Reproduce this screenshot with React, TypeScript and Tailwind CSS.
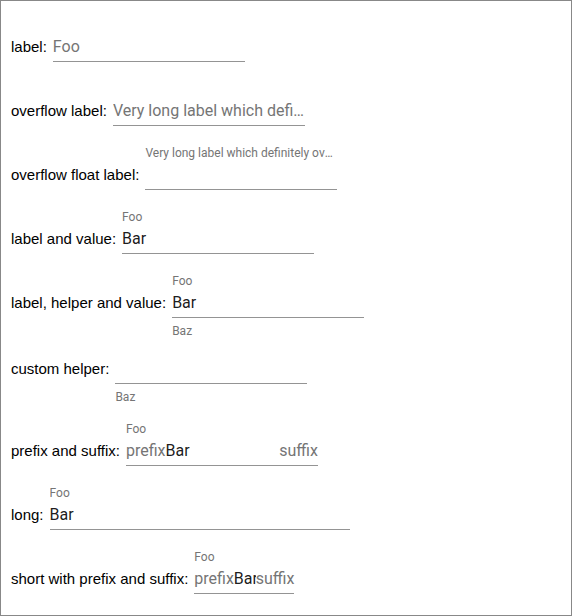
import React from 'react';
import { clsx, type ClassValue } from 'clsx';
import { twMerge } from 'tailwind-merge';

function cn(...inputs: ClassValue[]) {
  return twMerge(clsx(inputs));
}

type FieldProps = {
  label?: string;
  value?: string;
  float?: boolean;
  helper?: string;
  prefix?: string;
  suffix?: string;
  width: string;
};

function Field({ label, value, float, helper, prefix, suffix, width }: FieldProps) {
  const floated = !!label && (float || !!value || !!prefix);
  return (
    <div className={cn("flex flex-col font-['Roboto',sans-serif]", width)}>
      {label && (
        <div className="h-[16px] text-[12px] leading-[14px] text-[#757575] whitespace-nowrap overflow-hidden text-ellipsis">
          {floated ? label : ''}
        </div>
      )}
      <div className="h-[28px] border-b border-[#949494] flex items-start text-[16px] leading-[25px] whitespace-nowrap">
        {label && !floated ? (
          <span className="min-w-0 overflow-hidden text-ellipsis text-[#757575]">{label}</span>
        ) : (
          <>
            {prefix && <span className="text-[#757575] shrink-0">{prefix}</span>}
            <span className="flex-1 min-w-0 overflow-hidden text-black/90">{value}</span>
            {suffix && <span className="text-[#757575] shrink-0">{suffix}</span>}
          </>
        )}
      </div>
      {helper && (
        <div className="h-[18px] pt-[7px] text-[12px] leading-[12px] text-[#757575]">{helper}</div>
      )}
    </div>
  );
}

function Row({ title, hasLabel = true, children }: { title: string; hasLabel?: boolean; children: React.ReactNode }) {
  return (
    <div className="flex items-start gap-[6px]">
      <div
        className={cn(
          "h-[27px] text-[15px] leading-[25px] text-black whitespace-nowrap font-['Liberation_Sans',Arial,sans-serif]",
          hasLabel && 'mt-[16px]'
        )}
      >
        {title}
      </div>
      {children}
    </div>
  );
}

export default function App() {
  return (
    <div className="w-[572px] h-[616px] border border-[#888888] bg-white pt-[17px] pl-[10px] flex flex-col gap-[20px] overflow-hidden">
      <Row title="label:">
        <Field label="Foo" width="w-[192px]" />
      </Row>
      <Row title="overflow label:">
        <Field label="Very long label which definitely overflows the field width" width="w-[192px]" />
      </Row>
      <Row title="overflow float label:">
        <Field label="Very long label which definitely overflows the field width" float width="w-[192px]" />
      </Row>
      <Row title="label and value:">
        <Field label="Foo" value="Bar" width="w-[192px]" />
      </Row>
      <Row title="label, helper and value:">
        <Field label="Foo" value="Bar" helper="Baz" width="w-[192px]" />
      </Row>
      <Row title="custom helper:" hasLabel={false}>
        <Field helper="Baz" width="w-[192px]" />
      </Row>
      <Row title="prefix and suffix:">
        <Field label="Foo" value="Bar" prefix="prefix" suffix="suffix" width="w-[192px]" />
      </Row>
      <Row title="long:">
        <Field label="Foo" value="Bar" width="w-[300px]" />
      </Row>
      <Row title="short with prefix and suffix:">
        <Field label="Foo" value="Bar" prefix="prefix" suffix="suffix" width="w-[100px]" />
      </Row>
    </div>
  );
}
